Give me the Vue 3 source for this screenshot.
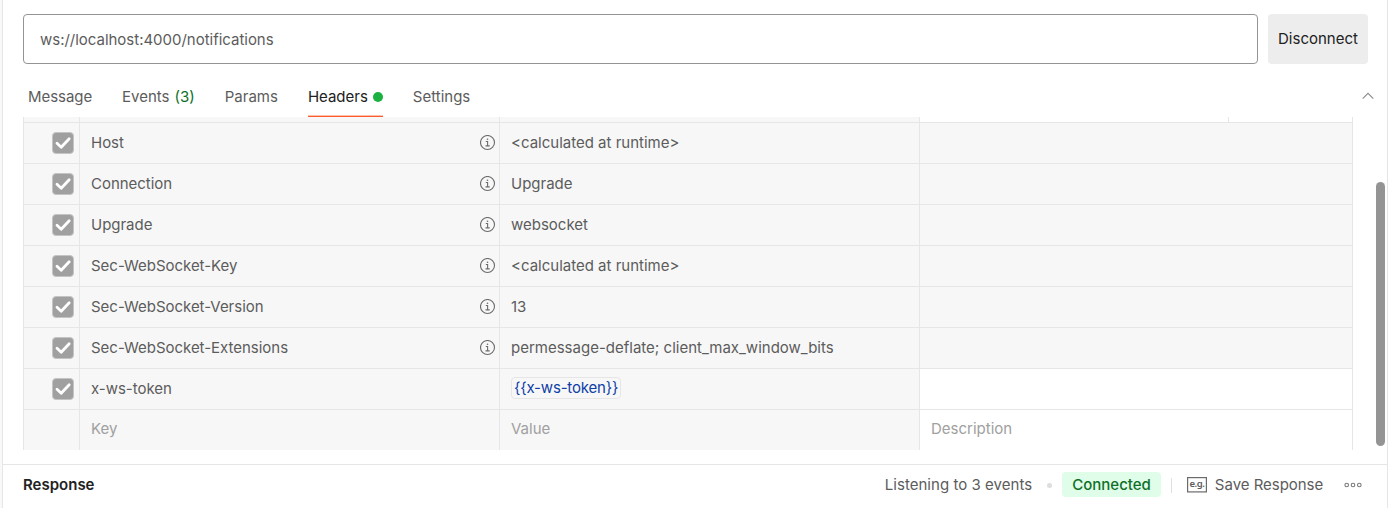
<script setup>
const tabs = [
  { label: 'Message' },
  { label: 'Events', count: '(3)' },
  { label: 'Params' },
  { label: 'Headers', active: true },
  { label: 'Settings' },
]
const rows = [
  { key: 'Host', value: '<calculated at runtime>', info: true },
  { key: 'Connection', value: 'Upgrade', info: true },
  { key: 'Upgrade', value: 'websocket', info: true },
  { key: 'Sec-WebSocket-Key', value: '<calculated at runtime>', info: true },
  { key: 'Sec-WebSocket-Version', value: '13', info: true },
  { key: 'Sec-WebSocket-Extensions', value: 'permessage-deflate; client_max_window_bits', info: true },
  { key: 'x-ws-token', variable: '{{x-ws-token}}' },
]
</script>

<template>
  <div class="page">
    <main class="panel">
      <div class="request">
        <div class="url">ws://localhost:4000/notifications</div>
        <button class="disconnect">Disconnect</button>
      </div>

      <nav class="tabs">
        <div v-for="t in tabs" :key="t.label" class="tab" :class="{ active: t.active }">
          <span>{{ t.label }}</span>
          <span v-if="t.count" class="count">{{ t.count }}</span>
          <i v-if="t.active" class="dot"></i>
        </div>
        <svg class="chevron" width="12" height="8" viewBox="0 0 12 8" fill="none" stroke="#8c8c8c" stroke-width="1.1">
          <path d="M.7 6.6 6 1.3l5.3 5.3" />
        </svg>
      </nav>

      <div class="body">
        <div class="table">
          <div class="row sliver">
            <div class="cell"></div>
            <div class="cell"></div>
            <div class="cell"></div>
            <div class="cell blank"><span class="split"></span></div>
          </div>
          <div v-for="r in rows" :key="r.key" class="row">
            <div class="cell check">
              <svg width="22" height="22" viewBox="0 0 22 22" fill="none">
                <rect x=".5" y=".5" width="21" height="21" rx="3.5" fill="#a0a0a0" stroke="#c4c4c4" />
                <path d="M5 11.3 9.2 15.2 17.2 6.7" stroke="#fff" stroke-width="2.8" stroke-linecap="round" stroke-linejoin="round" />
              </svg>
            </div>
            <div class="cell key">
              <span>{{ r.key }}</span>
              <svg v-if="r.info" width="16" height="16" viewBox="0 0 16 16" fill="none" stroke="#6b6b6b">
                <circle cx="7.5" cy="7.5" r="7" stroke-width="1.1" />
                <path d="M5.8 6.5H7.6V10.7M5.5 10.9h4.2" stroke-width="1.1" />
                <circle cx="7.5" cy="4.3" r=".8" fill="#6b6b6b" stroke="none" />
              </svg>
            </div>
            <div class="cell">
              <span v-if="r.variable" class="variable">{{ r.variable }}</span>
              <span v-else>{{ r.value }}</span>
            </div>
            <div class="cell" :class="{ blank: r.variable }"></div>
          </div>
          <div class="row last">
            <div class="cell"></div>
            <div class="cell">Key</div>
            <div class="cell">Value</div>
            <div class="cell blank">Description</div>
          </div>
        </div>
        <div class="scroll"><div class="thumb"></div></div>
      </div>

      <footer class="response">
        <strong>Response</strong>
        <span class="listening">Listening to 3 events</span>
        <i class="sep-dot"></i>
        <span class="badge">Connected</span>
        <i class="sep"></i>
        <svg class="example" width="20" height="16" viewBox="0 0 20 16">
          <rect x=".6" y=".6" width="18.8" height="14.3" fill="none" stroke="#6b6b6b" stroke-width="1.2" />
          <text x="2.4" y="10" textLength="15.4" class="eg">e.g.</text>
        </svg>
        <span class="save">Save Response</span>
        <svg class="more" width="18" height="6" viewBox="0 0 18 6" fill="none" stroke="#7a7a7a" stroke-width="1.1">
          <circle cx="2.7" cy="3" r="1.8" />
          <circle cx="9" cy="3" r="1.8" />
          <circle cx="15.3" cy="3" r="1.8" />
        </svg>
      </footer>
    </main>
  </div>
</template>

<style>
body { background: #fff; overflow: hidden; }
</style>

<style scoped>
* { box-sizing: border-box; }
.page {
  width: 1396px;
  height: 508px;
  padding-left: 2px;
  background: linear-gradient(90deg, #f9f9f9 2px, #fff 2px);
  font: 15px/20px Inter, "Liberation Sans", sans-serif;
  color: #5c5c5c;
}
.panel {
  width: 1386px;
  height: 508px;
  border: solid #e6e6e6;
  border-width: 0 1px;
}
.request { display: flex; gap: 10px; padding: 14px 0 0 20px; }
.url {
  width: 1235px;
  height: 50px;
  padding: 15px 16px;
  border: 1px solid #949494;
  border-radius: 4px;
  letter-spacing: -0.02px;
}
.disconnect {
  width: 100px;
  height: 50px;
  padding: 0;
  border: 0;
  border-radius: 4px;
  background: #ededed;
  color: #212121;
  font: inherit;
}
.tabs { display: flex; align-items: flex-start; gap: 30px; height: 53px; padding: 23px 13px 0 25px; }
.tab { display: flex; align-items: center; height: 30px; padding-bottom: 10px; white-space: nowrap; }
.tab:first-child { letter-spacing: -0.06px; }
.tab.active { color: #212121; border-bottom: 1px solid #ff5a30; padding-bottom: 9px; box-shadow: inset 0 -1px #ffc0aa; }
.count { margin-left: 5px; color: #0e7027; }
.dot { width: 10px; height: 10px; margin-left: 5px; border-radius: 50%; background: #1bb141; }
.chevron { margin: 5px 0 0 auto; }
.body { display: flex; height: 347px; padding-left: 20px; }
.table { width: 1330px; height: 333px; border: solid #e6e6e6; border-width: 0 1px; }
.row { display: grid; grid-template-columns: 56px 420px 420px 1fr; height: 41px; border-bottom: 1px solid #e6e6e6; }
.cell {
  display: flex;
  align-items: center;
  padding-left: 11px;
  background: #f7f7f7;
  border-right: 1px solid #e6e6e6;
  white-space: nowrap;
}
.cell:last-child { border-right: 0; }
.cell.blank { background: #fff; }
.sliver { height: 6px; }
.split { align-self: stretch; width: 1px; margin-left: 297px; background: #e6e6e6; }
.check { padding-left: 28px; }
.key { justify-content: space-between; padding-right: 3px; letter-spacing: -0.02px; }
.variable {
  height: 22px;
  margin-top: -2px;
  padding: 0 2px;
  border: 1px solid #e6e6e6;
  border-radius: 4px;
  color: #0d3fa6;
  letter-spacing: -0.18px;
}
.last { height: 40px; border: 0; color: #a0a0a0; }
.last .cell { padding-bottom: 2px; }
.scroll { padding: 65px 0 0 23px; }
.thumb { width: 9px; height: 264px; border-radius: 5px; background: #949494; }
.response {
  display: flex;
  align-items: center;
  height: 44px;
  padding: 0 25px 3px 20px;
  border-top: 1px solid #e6e6e6;
  white-space: nowrap;
}
.response strong { margin-right: auto; color: #212121; font-weight: 600; }
.listening { letter-spacing: 0.04px; }
.sep-dot { width: 5px; height: 5px; margin: 0 10px 0 15px; border-radius: 50%; background: #dedede; }
.badge { height: 25px; margin-top: -1px; padding: 0 10px; border-radius: 4px; background: #e0fdea; color: #0e7027; font-weight: 500; line-height: 25px; }
.sep { width: 1px; height: 15px; margin: 0 15px 0 10px; background: #e0e0e0; }
.example { margin-right: 8px; }
.save { letter-spacing: -0.03px; }
.eg { font: 600 9.5px "Noto Sans", sans-serif; fill: #5c5c5c; }
.more { margin-left: 20.8px; }
</style>
